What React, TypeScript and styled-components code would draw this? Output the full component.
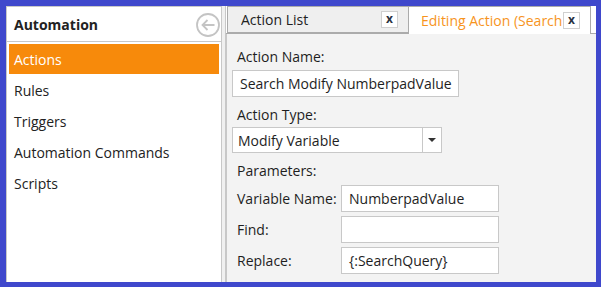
import React from 'react';
import styled, { createGlobalStyle } from 'styled-components';

const GlobalStyle = createGlobalStyle`
  html, body {
    margin: 0;
    padding: 0;
    background: #ffffff;
  }
  body {
    font-family: 'Open Sans', 'Noto Sans', sans-serif;
  }
`;

export default function App() {
  const menuItems = ['Actions', 'Rules', 'Triggers', 'Automation Commands', 'Scripts'];

  return (
    <>
      <GlobalStyle />
      <Frame>
        <SidePanel>
          <SideHeader>
            <SideTitle>Automation</SideTitle>
            <BackIcon width="24" height="24" viewBox="0 0 24 24">
              <circle cx="12" cy="12" r="11" fill="none" stroke="#c4c4c4" strokeWidth="1.8" />
              <path d="M18.5 12H6.5M11.5 7L6.5 12l5 5" fill="none" stroke="#c4c4c4" strokeWidth="1.8" />
            </BackIcon>
          </SideHeader>
          <MenuList>
            {menuItems.map((item, index) => (
              <MenuItem key={item} $active={index === 0}>
                {item}
              </MenuItem>
            ))}
          </MenuList>
        </SidePanel>
        <Splitter />
        <MainArea>
          <TabStrip>
            <Tab $active={false}>
              <TabLabel $active={false}>Action List</TabLabel>
              <CloseBox>x</CloseBox>
            </Tab>
            <Tab $active>
              <TabLabel $active>Editing Action (Search</TabLabel>
              <CloseBox>x</CloseBox>
            </Tab>
          </TabStrip>
          <Content>
            <FieldLabel>Action Name:</FieldLabel>
            <TextBox $width={227}>Search Modify NumberpadValue</TextBox>
            <FieldLabel>Action Type:</FieldLabel>
            <Combo>
              <ComboText>Modify Variable</ComboText>
              <ComboButton>
                <svg width="8" height="4" viewBox="0 0 8 4">
                  <path d="M0 0h8L4 4z" fill="#333" />
                </svg>
              </ComboButton>
            </Combo>
            <FieldLabel>Parameters:</FieldLabel>
            <ParamGrid>
              <ParamLabel>Variable Name:</ParamLabel>
              <TextBox $width={158}>NumberpadValue</TextBox>
              <ParamLabel>Find:</ParamLabel>
              <TextBox $width={158} />
              <ParamLabel>Replace:</ParamLabel>
              <TextBox $width={158}>{'{:SearchQuery}'}</TextBox>
            </ParamGrid>
          </Content>
        </MainArea>
      </Frame>
    </>
  );
}

const Frame = styled.div`
  box-sizing: border-box;
  width: 601px;
  height: 287px;
  border-style: solid;
  border-color: #3f48cc;
  border-width: 6px 5px 5px 6px;
  display: flex;
  background: #ffffff;
  color: #1e1e1e;
  font-size: 14px;
`;

const SidePanel = styled.div`
  box-sizing: border-box;
  width: 216px;
  border: 1px solid #c8c8c8;
  border-bottom: none;
  display: flex;
  flex-direction: column;
`;

const SideHeader = styled.div`
  box-sizing: border-box;
  height: 35px;
  border-bottom: 1px solid #c8c8c8;
  display: flex;
  align-items: center;
  justify-content: space-between;
  padding: 1px 1px 0 7px;
`;

const SideTitle = styled.span`
  font-weight: 700;
  font-size: 14px;
  color: #222;
`;

const BackIcon = styled.svg`
  display: block;
`;

const MenuList = styled.div`
  display: flex;
  flex-direction: column;
  padding: 2px;
`;

const MenuItem = styled.div<{ $active: boolean }>`
  height: 30px;
  margin-bottom: 1px;
  display: flex;
  align-items: center;
  padding-left: 5px;
  background: ${(p) => (p.$active ? '#f78a0b' : 'transparent')};
  color: ${(p) => (p.$active ? '#ffffff' : '#222')};
`;

const Splitter = styled.div`
  width: 3px;
  background: #f0f0f0;
  border-right: 1px solid #c8c8c8;
`;

const MainArea = styled.div`
  flex: 1;
  display: flex;
  flex-direction: column;
  background: #ffffff;
  min-width: 0;
`;

const TabStrip = styled.div`
  height: 27px;
  display: flex;
  align-items: flex-end;
  border-bottom: 1px solid #ababab;
  padding-left: 1px;
`;

const Tab = styled.div<{ $active: boolean }>`
  box-sizing: border-box;
  height: ${(p) => (p.$active ? '28px' : '27px')};
  margin-bottom: ${(p) => (p.$active ? '-1px' : '0')};
  width: 182px;
  display: flex;
  align-items: center;
  padding: ${(p) => (p.$active ? '0 10px 0 12px' : '0 10px 0 13px')};
  border: 1px solid #ababab;
  border-bottom: ${(p) => (p.$active ? 'none' : '1px solid #ababab')};
  border-left: ${(p) => (p.$active ? 'none' : '1px solid #ababab')};
  background: ${(p) => (p.$active ? '#ffffff' : '#efefef')};
`;

const TabLabel = styled.span<{ $active: boolean }>`
  flex: 1;
  min-width: 0;
  overflow: hidden;
  white-space: nowrap;
  padding-bottom: 1px;
  color: ${(p) => (p.$active ? '#f7941d' : '#222')};
`;

const CloseBox = styled.span`
  box-sizing: border-box;
  width: 17px;
  height: 17px;
  flex: none;
  border: 1px solid #d0d0d0;
  background: #fff;
  display: flex;
  align-items: center;
  justify-content: center;
  font-size: 12px;
  font-weight: 700;
  line-height: 1;
  color: #2a3040;
  padding-bottom: 2px;
`;

const Content = styled.div`
  flex: 1;
  background: #f3f3f3;
  border-left: 1px solid #c8c8c8;
  padding: 9px 5px 0 5px;
  display: flex;
  flex-direction: column;
  align-items: flex-start;
`;

const FieldLabel = styled.div`
  height: 26px;
  display: flex;
  align-items: center;
  padding-left: 5px;
  margin-bottom: 1px;
`;

const TextBox = styled.div<{ $width: number }>`
  box-sizing: border-box;
  width: ${(p) => p.$width}px;
  height: 27px;
  border: 1px solid #c8c8c8;
  background: #fff;
  display: flex;
  align-items: center;
  padding-left: 7px;
  white-space: nowrap;
  overflow: hidden;
  margin-bottom: 4px;
`;

const Combo = styled.div`
  box-sizing: border-box;
  width: 210px;
  height: 26px;
  border: 1px solid #c8c8c8;
  background: #fff;
  display: flex;
  margin-bottom: 4px;
  margin-top: -1px;
`;

const ComboText = styled.div`
  flex: 1;
  display: flex;
  align-items: center;
  padding-left: 5px;
`;

const ComboButton = styled.div`
  width: 18px;
  border-left: 1px solid #c8c8c8;
  display: flex;
  align-items: center;
  justify-content: center;
`;

const ParamGrid = styled.div`
  display: grid;
  grid-template-columns: 109px auto;
  align-items: start;
  margin-top: 1px;
`;

const ParamLabel = styled.div`
  height: 27px;
  display: flex;
  align-items: center;
  padding-left: 5px;
`;
